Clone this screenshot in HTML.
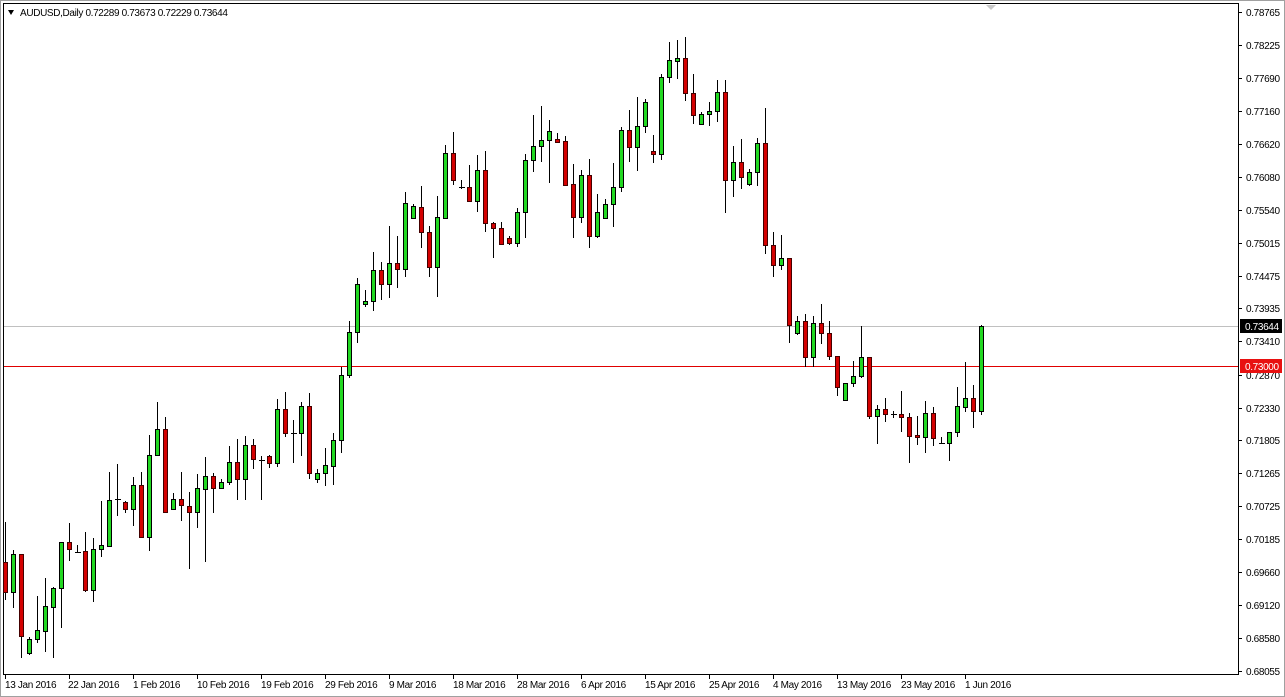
<!DOCTYPE html>
<html><head><meta charset="utf-8"><style>
html,body{margin:0;padding:0;background:#fff;width:1285px;height:697px;overflow:hidden}
svg{display:block}
text{font-family:"Liberation Sans",sans-serif;font-size:10px;letter-spacing:-0.35px;fill:#000}
.g{fill:#22d822;stroke:#000;stroke-width:1}
.r{fill:#d40000;stroke:#400;stroke-width:1}
</style></head><body>
<svg width="1285" height="697" xmlns="http://www.w3.org/2000/svg">
<rect x="0" y="0" width="1285" height="697" fill="#fff"/>
<rect x="0.5" y="0.5" width="1284" height="696" fill="none" stroke="#a0a0a0"/>
<rect x="3.5" y="3.5" width="1235" height="671" fill="none" stroke="#000"/>
<polygon points="986,5 996,5 991,10" fill="#c8c8c8"/>
<line x1="4" y1="326.5" x2="1238" y2="326.5" stroke="#c0c0c0"/>
<line x1="4" y1="366.5" x2="1238" y2="366.5" stroke="#e00000"/>
<polygon points="8,10 14,10 11,15" fill="#000"/>
<text x="20" y="16">AUDUSD,Daily  0.72289 0.73673 0.72229 0.73644</text>
<path stroke="#000" stroke-width="1" fill="none" d="
M5.5 522V600M13.5 550V608M21.5 554V658M29.5 637V655M37.5 596V643M45.5 578V652M53.5 587V658M61.5 542V628M69.5 523V561M77.5 545V552
M85.5 532V592M93.5 538V602M101.5 501V557M109.5 472V546M117.5 464V516M125.5 501V513M133.5 477V526M141.5 472V537M149.5 435V551M157.5 402V455
M165.5 417V512M173.5 493V509M181.5 472V521M189.5 492V569M197.5 474V528M205.5 457V562M213.5 473V513M221.5 479V489M229.5 446V485M237.5 439V500
M245.5 436V500M253.5 439V469M261.5 456V500M269.5 455V468M277.5 399V467M285.5 392V437M293.5 420V463M301.5 402V456M309.5 393V479M317.5 469V483
M325.5 448V486M333.5 433V485M341.5 367V453M349.5 321V378M357.5 278V343M365.5 290V307M373.5 252V311M381.5 262V300M389.5 226V298M397.5 236V288
M405.5 192V277M413.5 204V218M421.5 186V248M429.5 226V277M437.5 196V297M445.5 145V218M453.5 132V185M461.5 180V189M469.5 165V201M477.5 155V212
M485.5 151V232M493.5 222V258M501.5 222V244M509.5 236V245M517.5 208V247M525.5 154V238M533.5 115V172M541.5 106V162M549.5 120V183M557.5 133V142
M565.5 136V186M573.5 164V238M581.5 170V223M589.5 159V248M597.5 194V238M605.5 199V218M613.5 163V227M621.5 127V192M629.5 110V162M637.5 97V171
M645.5 99V133M653.5 135V163M661.5 74V160M669.5 42V83M677.5 40V79M685.5 37V101M693.5 74V124M701.5 112V125M709.5 102V126M717.5 80V122
M725.5 80V213M733.5 146V197M741.5 139V189M749.5 169V186M757.5 138V186M765.5 108V254M773.5 232V277M781.5 235V270M789.5 258V343M797.5 316V335
M805.5 314V367M813.5 316V367M821.5 304V344M829.5 321V360M837.5 356V396M845.5 383V400M853.5 361V387M861.5 326V378M869.5 357V419M877.5 405V444
M885.5 398V422M893.5 411V418M901.5 391V432M909.5 413V463M917.5 416V445M925.5 401V453M933.5 407V446M941.5 437V443M949.5 432V461M957.5 387V437
M965.5 362V412M973.5 385V428M981.5 325V415
M75 552.5H81M115 499.5H121M259 460.5H265M291 433.5H297M459 187.5H465M891 414.5H897M939 443.5H945"/>
<rect class="r" x="3.5" y="562.5" width="4" height="30"/>
<rect class="g" x="11.5" y="554.5" width="4" height="38"/>
<rect class="r" x="19.5" y="554.5" width="4" height="82"/>
<rect class="g" x="27.5" y="639.5" width="4" height="14"/>
<rect class="g" x="35.5" y="630.5" width="4" height="9"/>
<rect class="g" x="43.5" y="606.5" width="4" height="25"/>
<rect class="g" x="51.5" y="588.5" width="4" height="19"/>
<rect class="g" x="59.5" y="542.5" width="4" height="46"/>
<rect class="r" x="67.5" y="542.5" width="4" height="7"/>
<rect class="r" x="83.5" y="551.5" width="4" height="39"/>
<rect class="g" x="91.5" y="549.5" width="4" height="41"/>
<rect class="g" x="99.5" y="545.5" width="4" height="4"/>
<rect class="g" x="107.5" y="500.5" width="4" height="46"/>
<rect class="r" x="123.5" y="502.5" width="4" height="7"/>
<rect class="g" x="131.5" y="485.5" width="4" height="24"/>
<rect class="r" x="139.5" y="485.5" width="4" height="52"/>
<rect class="g" x="147.5" y="455.5" width="4" height="82"/>
<rect class="g" x="155.5" y="429.5" width="4" height="26"/>
<rect class="r" x="163.5" y="429.5" width="4" height="83"/>
<rect class="g" x="171.5" y="499.5" width="4" height="10"/>
<rect class="r" x="179.5" y="499.5" width="4" height="6"/>
<rect class="r" x="187.5" y="506.5" width="4" height="6"/>
<rect class="g" x="195.5" y="488.5" width="4" height="24"/>
<rect class="g" x="203.5" y="476.5" width="4" height="13"/>
<rect class="r" x="211.5" y="476.5" width="4" height="12"/>
<rect class="g" x="219.5" y="482.5" width="4" height="6"/>
<rect class="g" x="227.5" y="462.5" width="4" height="20"/>
<rect class="r" x="235.5" y="462.5" width="4" height="17"/>
<rect class="g" x="243.5" y="445.5" width="4" height="34"/>
<rect class="r" x="251.5" y="445.5" width="4" height="14"/>
<rect class="r" x="267.5" y="456.5" width="4" height="7"/>
<rect class="g" x="275.5" y="409.5" width="4" height="54"/>
<rect class="r" x="283.5" y="409.5" width="4" height="24"/>
<rect class="g" x="299.5" y="406.5" width="4" height="27"/>
<rect class="r" x="307.5" y="406.5" width="4" height="67"/>
<rect class="g" x="315.5" y="473.5" width="4" height="6"/>
<rect class="g" x="323.5" y="465.5" width="4" height="8"/>
<rect class="g" x="331.5" y="440.5" width="4" height="26"/>
<rect class="g" x="339.5" y="375.5" width="4" height="65"/>
<rect class="g" x="347.5" y="332.5" width="4" height="43"/>
<rect class="g" x="355.5" y="284.5" width="4" height="48"/>
<rect class="g" x="363.5" y="301.5" width="4" height="3"/>
<rect class="g" x="371.5" y="270.5" width="4" height="31"/>
<rect class="r" x="379.5" y="270.5" width="4" height="14"/>
<rect class="g" x="387.5" y="263.5" width="4" height="21"/>
<rect class="r" x="395.5" y="263.5" width="4" height="6"/>
<rect class="g" x="403.5" y="203.5" width="4" height="66"/>
<rect class="g" x="411.5" y="206.5" width="4" height="12"/>
<rect class="r" x="419.5" y="207.5" width="4" height="25"/>
<rect class="r" x="427.5" y="232.5" width="4" height="35"/>
<rect class="g" x="435.5" y="217.5" width="4" height="50"/>
<rect class="g" x="443.5" y="153.5" width="4" height="65"/>
<rect class="r" x="451.5" y="153.5" width="4" height="27"/>
<rect class="r" x="467.5" y="187.5" width="4" height="14"/>
<rect class="g" x="475.5" y="170.5" width="4" height="31"/>
<rect class="r" x="483.5" y="170.5" width="4" height="53"/>
<rect class="r" x="491.5" y="223.5" width="4" height="5"/>
<rect class="r" x="499.5" y="228.5" width="4" height="16"/>
<rect class="r" x="507.5" y="238.5" width="4" height="5"/>
<rect class="g" x="515.5" y="212.5" width="4" height="31"/>
<rect class="g" x="523.5" y="160.5" width="4" height="52"/>
<rect class="g" x="531.5" y="146.5" width="4" height="14"/>
<rect class="g" x="539.5" y="140.5" width="4" height="6"/>
<rect class="g" x="547.5" y="131.5" width="4" height="9"/>
<rect class="r" x="555.5" y="139.5" width="4" height="3"/>
<rect class="r" x="563.5" y="141.5" width="4" height="44"/>
<rect class="r" x="571.5" y="184.5" width="4" height="33"/>
<rect class="g" x="579.5" y="175.5" width="4" height="42"/>
<rect class="r" x="587.5" y="175.5" width="4" height="61"/>
<rect class="g" x="595.5" y="212.5" width="4" height="24"/>
<rect class="g" x="603.5" y="204.5" width="4" height="14"/>
<rect class="g" x="611.5" y="187.5" width="4" height="17"/>
<rect class="g" x="619.5" y="130.5" width="4" height="57"/>
<rect class="r" x="627.5" y="130.5" width="4" height="17"/>
<rect class="g" x="635.5" y="126.5" width="4" height="21"/>
<rect class="g" x="643.5" y="102.5" width="4" height="24"/>
<rect class="r" x="651.5" y="151.5" width="4" height="3"/>
<rect class="g" x="659.5" y="77.5" width="4" height="77"/>
<rect class="g" x="667.5" y="60.5" width="4" height="17"/>
<rect class="g" x="675.5" y="58.5" width="4" height="3"/>
<rect class="r" x="683.5" y="58.5" width="4" height="35"/>
<rect class="r" x="691.5" y="93.5" width="4" height="22"/>
<rect class="g" x="699.5" y="114.5" width="4" height="10"/>
<rect class="g" x="707.5" y="111.5" width="4" height="3"/>
<rect class="g" x="715.5" y="92.5" width="4" height="19"/>
<rect class="r" x="723.5" y="92.5" width="4" height="88"/>
<rect class="g" x="731.5" y="162.5" width="4" height="18"/>
<rect class="r" x="739.5" y="162.5" width="4" height="15"/>
<rect class="g" x="747.5" y="172.5" width="4" height="12"/>
<rect class="g" x="755.5" y="143.5" width="4" height="29"/>
<rect class="r" x="763.5" y="143.5" width="4" height="102"/>
<rect class="r" x="771.5" y="245.5" width="4" height="20"/>
<rect class="g" x="779.5" y="258.5" width="4" height="7"/>
<rect class="r" x="787.5" y="258.5" width="4" height="67"/>
<rect class="g" x="795.5" y="321.5" width="4" height="12"/>
<rect class="r" x="803.5" y="321.5" width="4" height="36"/>
<rect class="g" x="811.5" y="323.5" width="4" height="34"/>
<rect class="r" x="819.5" y="323.5" width="4" height="10"/>
<rect class="r" x="827.5" y="333.5" width="4" height="23"/>
<rect class="r" x="835.5" y="356.5" width="4" height="31"/>
<rect class="g" x="843.5" y="383.5" width="4" height="17"/>
<rect class="g" x="851.5" y="376.5" width="4" height="7"/>
<rect class="g" x="859.5" y="357.5" width="4" height="19"/>
<rect class="r" x="867.5" y="357.5" width="4" height="59"/>
<rect class="g" x="875.5" y="409.5" width="4" height="7"/>
<rect class="r" x="883.5" y="409.5" width="4" height="5"/>
<rect class="r" x="899.5" y="414.5" width="4" height="3"/>
<rect class="r" x="907.5" y="417.5" width="4" height="19"/>
<rect class="r" x="915.5" y="435.5" width="4" height="2"/>
<rect class="g" x="923.5" y="413.5" width="4" height="24"/>
<rect class="r" x="931.5" y="413.5" width="4" height="25"/>
<rect class="g" x="947.5" y="432.5" width="4" height="11"/>
<rect class="g" x="955.5" y="406.5" width="4" height="26"/>
<rect class="g" x="963.5" y="398.5" width="4" height="9"/>
<rect class="r" x="971.5" y="398.5" width="4" height="13"/>
<rect class="g" x="979.5" y="326.5" width="4" height="85"/>
<path stroke="#000" d="M1238.5 12V672M1238 12.5h4M1238 45.5h4M1238 78.5h4M1238 111.5h4M1238 144.5h4M1238 177.5h4M1238 210.5h4M1238 243.5h4M1238 276.5h4M1238 308.5h4M1238 341.5h4M1238 375.5h4M1238 408.5h4M1238 440.5h4M1238 473.5h4M1238 506.5h4M1238 539.5h4M1238 572.5h4M1238 605.5h4M1238 638.5h4M1238 671.5h4"/>
<g>
<text x="1246" y="16">0.78765</text><text x="1246" y="49">0.78225</text><text x="1246" y="82">0.77690</text><text x="1246" y="115">0.77160</text><text x="1246" y="148">0.76620</text><text x="1246" y="181">0.76080</text><text x="1246" y="214">0.75540</text><text x="1246" y="247">0.75015</text><text x="1246" y="280">0.74475</text><text x="1246" y="312">0.73935</text><text x="1246" y="345">0.73410</text><text x="1246" y="379">0.72870</text><text x="1246" y="412">0.72330</text><text x="1246" y="444">0.71805</text><text x="1246" y="477">0.71265</text><text x="1246" y="510">0.70725</text><text x="1246" y="543">0.70185</text><text x="1246" y="576">0.69660</text><text x="1246" y="609">0.69120</text><text x="1246" y="642">0.68580</text><text x="1246" y="675">0.68055</text>
</g>
<rect x="1240" y="319" width="42" height="14" fill="#000"/>
<text x="1245" y="330" style="fill:#fff">0.73644</text>
<rect x="1240" y="359" width="42" height="14" fill="#e81010"/>
<text x="1245" y="370" style="fill:#fff">0.73000</text>
<path stroke="#000" d="M5.5 674v5M69.5 674v5M133.5 674v5M197.5 674v5M261.5 674v5M325.5 674v5M389.5 674v5M453.5 674v5M517.5 674v5M581.5 674v5M645.5 674v5M709.5 674v5M773.5 674v5M837.5 674v5M901.5 674v5M965.5 674v5"/>
<g>
<text x="5" y="688">13 Jan 2016</text><text x="68" y="688">22 Jan 2016</text><text x="133" y="688">1 Feb 2016</text><text x="197" y="688">10 Feb 2016</text><text x="261" y="688">19 Feb 2016</text><text x="325" y="688">29 Feb 2016</text><text x="389" y="688">9 Mar 2016</text><text x="453" y="688">18 Mar 2016</text><text x="517" y="688">28 Mar 2016</text><text x="581" y="688">6 Apr 2016</text><text x="645" y="688">15 Apr 2016</text><text x="709" y="688">25 Apr 2016</text><text x="773" y="688">4 May 2016</text><text x="837" y="688">13 May 2016</text><text x="901" y="688">23 May 2016</text><text x="965" y="688">1 Jun 2016</text>
</g>
</svg>
</body></html>
